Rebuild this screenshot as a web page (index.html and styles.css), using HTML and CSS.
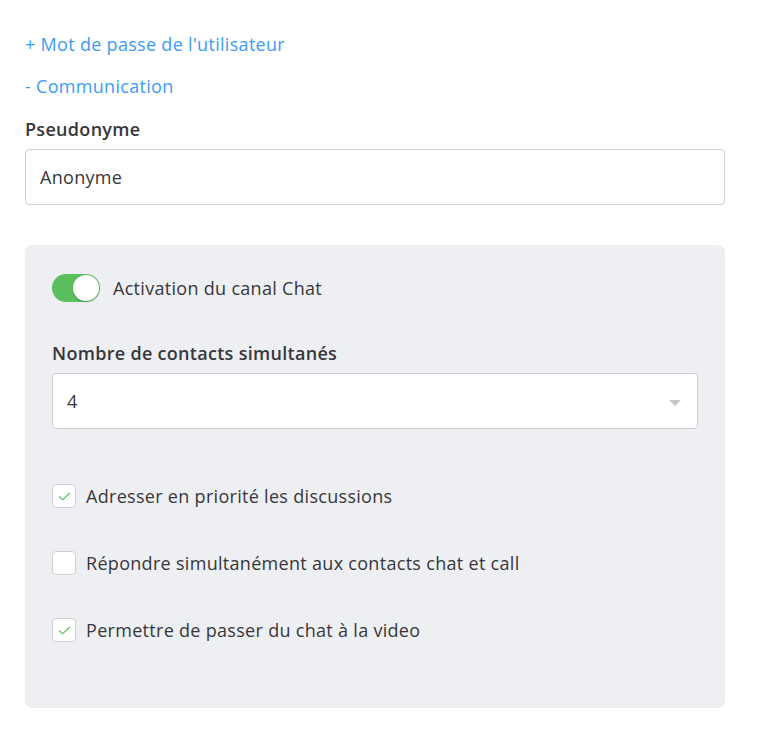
FILE: index.html
```html
<!DOCTYPE html>
<html lang="fr">
<head>
<meta charset="utf-8">
<link rel="stylesheet" href="styles.css">
</head>
<body>
<div class="page">
  <a class="toggle-link" href="#">+ Mot de passe de l'utilisateur</a>
  <a class="toggle-link" href="#">- Communication</a>
  <label class="field-label">Pseudonyme</label>
  <div class="input">Anonyme</div>
  <section class="panel">
    <div class="switch-row">
      <span class="switch"><span class="knob"></span></span>
      <span class="switch-text">Activation du canal Chat</span>
    </div>
    <label class="field-label panel-label">Nombre de contacts simultanés</label>
    <div class="input select">
      <span>4</span>
      <span class="caret"></span>
    </div>
    <ul class="checks">
      <li class="check-row"><span class="box checked"><svg viewBox="0 0 14 10" width="13" height="9"><path d="M1 5 L5 8.6 L13 1.2" fill="none" stroke="#5cc466" stroke-width="1.4"/></svg></span>Adresser en priorité les discussions</li>
      <li class="check-row"><span class="box"></span>Répondre simultanément aux contacts chat et call</li>
      <li class="check-row"><span class="box checked"><svg viewBox="0 0 14 10" width="13" height="9"><path d="M1 5 L5 8.6 L13 1.2" fill="none" stroke="#5cc466" stroke-width="1.4"/></svg></span>Permettre de passer du chat à la video</li>
    </ul>
  </section>
</div>
</body>
</html>
```
FILE: styles.css
```css
html, body { margin: 0; padding: 0; background: #fff; }
body { font-family: "Open Sans", "Lato", sans-serif; color: #37373c; font-size: 18px; letter-spacing: 0.3px; }
.page { padding: 32px 33px 0 25px; display: flex; flex-direction: column; width: 700px; }
.toggle-link { color: #3d9cf2; text-decoration: none; line-height: 24px; height: 24px; margin-bottom: 18px; display: block; }
.field-label { font-weight: 600; line-height: 24px; display: block; margin-top: 1px; margin-bottom: 8px; color: #37373c; }
.input { box-sizing: border-box; height: 56px; border: 1px solid #cfd0d4; border-radius: 4px; background: #fff; padding: 0 14px; display: flex; align-items: center; }
.panel { margin-top: 40px; background: #eeeff3; border-radius: 7px; padding: 28px 27px 0 27px; height: 463px; box-sizing: border-box; }
.switch-row { display: flex; align-items: center; gap: 13px; height: 30px; }
.switch { position: relative; width: 48px; height: 28px; background: #5bbf5e; border-radius: 14px; box-sizing: border-box; }
.knob { position: absolute; right: 1px; top: 1px; width: 26px; height: 26px; background: #fff; border-radius: 50%; box-shadow: 0 1px 2px rgba(0,0,0,.2); }
.panel-label { margin-top: 38px; margin-bottom: 8px; }
.select { justify-content: space-between; padding-right: 16px; }
.caret { width: 0; height: 0; border-left: 6px solid transparent; border-right: 6px solid transparent; border-top: 6px solid #c4c5c9; margin-top: 4px; }
.checks { list-style: none; margin: 55px 0 0 0; padding: 0; display: flex; flex-direction: column; gap: 43px; }
.check-row { display: flex; align-items: center; gap: 10px; height: 24px; }
.box { box-sizing: border-box; width: 24px; height: 24px; border: 1px solid #cfd0d4; border-radius: 4px; background: #fff; display: flex; align-items: center; justify-content: center; }
```
